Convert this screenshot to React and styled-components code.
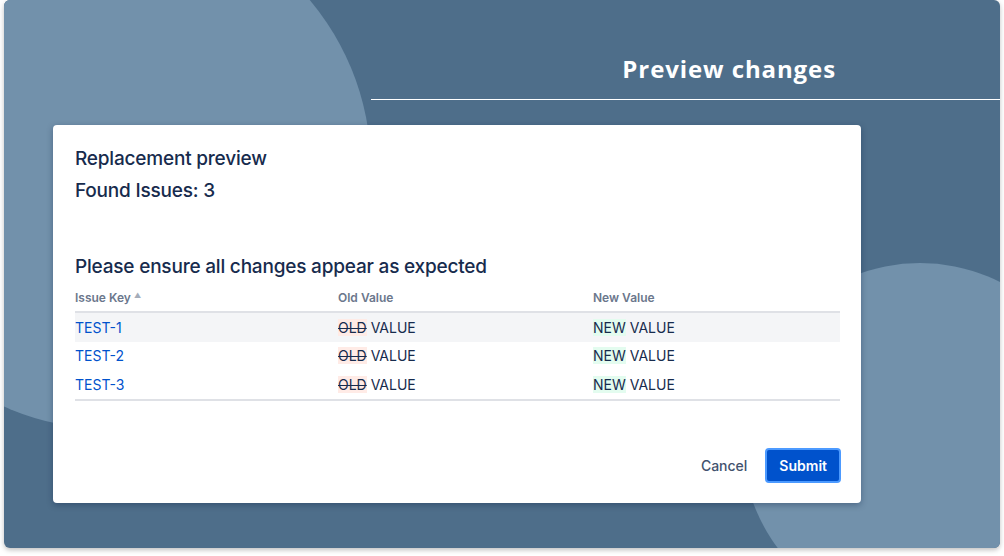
import React from "react";
import styled, { createGlobalStyle } from "styled-components";

const GlobalStyle = createGlobalStyle`
  html, body {
    margin: 0;
    padding: 0;
    background: #ffffff;
  }
  body {
    font-family: Inter, "Liberation Sans", Arial, sans-serif;
    color: #172b4d;
  }
`;

const Page = styled.div`
  width: 1004px;
  height: 556px;
  padding: 0 4px 8px;
  box-sizing: border-box;
`;

const Frame = styled.div`
  position: relative;
  overflow: hidden;
  width: 996px;
  height: 548px;
  background: #4e6e8a;
  border-radius: 6px;
  box-shadow: 0 2px 5px rgba(0, 0, 0, 0.25);
`;

const Blob = styled.div`
  position: absolute;
  left: ${({ $cx, $r }) => $cx - $r}px;
  top: ${({ $cy, $r }) => $cy - $r}px;
  width: ${({ $r }) => $r * 2}px;
  height: ${({ $r }) => $r * 2}px;
  border-radius: 50%;
  background: #7291ab;
`;

const Content = styled.div`
  position: relative;
  display: flex;
  flex-direction: column;
`;

const Header = styled.div`
  margin-left: 367px;
  height: 100px;
  border-bottom: 1px solid #ffffff;
  display: flex;
  justify-content: flex-end;
  align-items: flex-start;
  padding: 54px 164px 0 0;
  box-sizing: border-box;
`;

const Title = styled.h1`
  margin: 0;
  font-family: "Open Sans", "DejaVu Sans", sans-serif;
  font-size: 24px;
  line-height: 30px;
  font-weight: 700;
  letter-spacing: 0.9px;
  color: #ffffff;
`;

const Card = styled.div`
  margin: 25px 0 0 49px;
  width: 808px;
  height: 378px;
  box-sizing: border-box;
  background: #ffffff;
  border-radius: 4px;
  box-shadow: 0 2px 6px rgba(9, 30, 66, 0.35);
  padding: 20px 20px 20px 22px;
  display: flex;
  flex-direction: column;
`;

const Heading = styled.div`
  font-size: 19px;
  font-weight: 500;
  line-height: 28px;
  color: #172b4d;
  margin-top: ${({ $mt }) => $mt || 0}px;
  letter-spacing: -0.2px;
`;

const Table = styled.div`
  margin-top: 7px;
  width: 765px;
  border-bottom: 2px solid #dfe1e6;
`;

const Row = styled.div`
  display: grid;
  grid-template-columns: 263px 255px 1fr;
  align-items: center;
  height: ${({ $head }) => ($head ? 25 : 28.5)}px;
  padding-bottom: ${({ $head }) => ($head ? 4 : 0)}px;
  box-sizing: border-box;
  background: ${({ $active }) => ($active ? "#f4f5f7" : "transparent")};
  border-bottom: ${({ $head }) => ($head ? "2px solid #dfe1e6" : "none")};
`;

const HeadCell = styled.div`
  font-size: 12px;
  font-weight: 600;
  color: #6b778c;
  display: flex;
  align-items: center;
  gap: 3px;
`;

const SortMark = styled.span`
  font-size: 7px;
  color: #a5adba;
  margin-top: -4px;
`;

const Cell = styled.div`
  font-size: 14px;
  color: #172b4d;
`;

const IssueLink = styled.a`
  color: #0052cc;
  text-decoration: none;
  font-size: 14px;
`;

const Removed = styled.span`
  background: #ffebe6;
  text-decoration: line-through;
`;

const Added = styled.span`
  background: #e3fcef;
`;

const Footer = styled.div`
  margin-top: auto;
  display: flex;
  justify-content: flex-end;
  align-items: center;
  gap: 4px;
`;

const Button = styled.button`
  font-family: inherit;
  font-size: 14px;
  font-weight: ${({ $primary }) => ($primary ? 600 : 500)};
  height: 35px;
  padding: 0 12px;
  border-radius: 4px;
  cursor: pointer;
  color: ${({ $primary }) => ($primary ? "#ffffff" : "#42526e")};
  background: ${({ $primary }) => ($primary ? "#0052cc" : "transparent")};
  border: ${({ $primary }) => ($primary ? "2px solid #4c9aff" : "2px solid transparent")};
  box-shadow: ${({ $primary }) => ($primary ? "inset 0 0 0 1px #0052cc" : "none")};
`;

const rows = ["TEST-1", "TEST-2", "TEST-3"];

export default function App() {
  return (
    <>
      <GlobalStyle />
      <Page>
        <Frame>
          <Blob $cx={106} $cy={168} $r={261} />
          <Blob $cx={916} $cy={441} $r={178} />
          <Content>
            <Header>
              <Title>Preview changes</Title>
            </Header>
            <Card>
              <Heading>Replacement preview</Heading>
              <Heading $mt={4}>Found Issues: 3</Heading>
              <Heading $mt={48}>Please ensure all changes appear as expected</Heading>
              <Table>
                <Row $head>
                  <HeadCell>Issue Key<SortMark>▲</SortMark></HeadCell>
                  <HeadCell>Old Value</HeadCell>
                  <HeadCell>New Value</HeadCell>
                </Row>
                {rows.map((key, i) => (
                  <Row key={key} $active={i === 0}>
                    <Cell><IssueLink href="#">{key}</IssueLink></Cell>
                    <Cell><Removed>OLD</Removed> VALUE</Cell>
                    <Cell><Added>NEW</Added> VALUE</Cell>
                  </Row>
                ))}
              </Table>
              <Footer>
                <Button>Cancel</Button>
                <Button $primary>Submit</Button>
              </Footer>
            </Card>
          </Content>
        </Frame>
      </Page>
    </>
  );
}
